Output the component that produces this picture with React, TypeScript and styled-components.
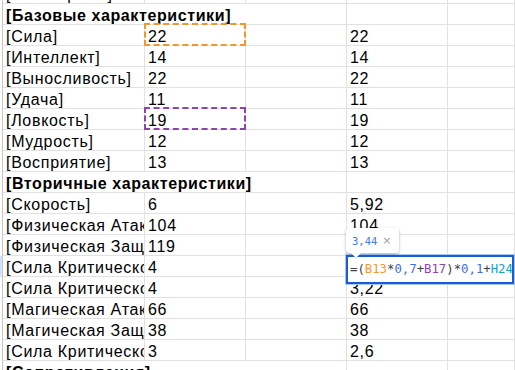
import React from 'react'
import styled, { createGlobalStyle } from 'styled-components'

const GlobalStyle = createGlobalStyle`
  html, body {
    margin: 0;
    padding: 0;
    background: #fff;
    overflow: hidden;
  }
  body {
    font-family: 'Liberation Sans', Arial, sans-serif;
    color: #000;
  }
`

const Viewport = styled.div`
  width: 515px;
  height: 370px;
  overflow: hidden;
`

const Sheet = styled.div`
  display: grid;
  grid-template-columns: 3px 142px 101px 101px 101px 1fr;
  grid-auto-rows: 21px;
  margin-top: -17px;
`

const Gutter = styled.div<{ $active?: boolean }>`
  box-sizing: border-box;
  border-right: 1px solid #c4c7c5;
  background: ${({ $active }) => ($active ? '#d3e3fd' : '#fff')};
`

const Cell = styled.div<{ $span?: number; $bold?: boolean; $open?: boolean }>`
  position: relative;
  grid-column: span ${({ $span }) => $span ?? 1};
  box-sizing: border-box;
  border-right: 1px solid #e1e1e1;
  border-bottom: 1px solid #e1e1e1;
  padding: 0 3px;
  font-size: 16px;
  letter-spacing: ${({ $bold }) => ($bold ? '0.6px' : '0.7px')};
  line-height: 24px;
  font-weight: ${({ $bold }) => ($bold ? 700 : 400)};
  white-space: nowrap;
  overflow: ${({ $open }) => ($open ? 'visible' : 'hidden')};
`

const Marquee = styled.div<{ $color: string }>`
  position: absolute;
  top: -2px;
  left: -1px;
  right: -1px;
  bottom: -1px;
  border: 2px dashed ${({ $color }) => $color};
  pointer-events: none;
`

const Editor = styled.div`
  position: absolute;
  top: -1px;
  left: -1px;
  z-index: 3;
  width: 168px;
  height: 29px;
  box-sizing: border-box;
  border: 2px solid #1a5dd1;
  outline: 1px solid #a8c7fa;
  background: #fff;
  padding-left: 2px;
  font-family: 'DejaVu Sans Mono', 'Liberation Mono', monospace;
  font-size: 12.3px;
  letter-spacing: 0;
  line-height: 25px;
  color: #3c4043;
  overflow: hidden;
`

const Ref = styled.span<{ $color: string }>`
  color: ${({ $color }) => $color};
`

const Bubble = styled.div`
  position: absolute;
  left: -1px;
  bottom: calc(100% + 3px);
  z-index: 4;
  display: flex;
  align-items: center;
  gap: 5px;
  height: 25px;
  padding: 0 7px 0 6px;
  box-sizing: border-box;
  background: #fff;
  border-radius: 3px;
  box-shadow: 0 1px 3px rgba(60, 64, 67, 0.3), 0 1px 2px rgba(60, 64, 67, 0.15);
  font-family: 'DejaVu Sans Mono', 'Liberation Mono', monospace;
  font-size: 10.5px;
  letter-spacing: 0;
  line-height: 20px;
  color: #4a78d6;

  &::after {
    content: '';
    position: absolute;
    left: 5px;
    bottom: -5px;
    border-left: 5px solid transparent;
    border-right: 5px solid transparent;
    border-top: 5px solid #fff;
    filter: drop-shadow(0 1px 0 rgba(60, 64, 67, 0.2));
  }
`

const Close = styled.span`
  color: #9aa0a6;
  font-family: 'DejaVu Sans', sans-serif;
  font-size: 11px;
`

type Row = {
  label: string
  b?: string
  d?: string
  header?: boolean
  mark?: string
  editing?: boolean
}

const rows: Row[] = [
  { label: '[Очки Время]', b: '111' },
  { label: '[Базовые характеристики]', header: true },
  { label: '[Сила]', b: '22', d: '22', mark: '#f5962a' },
  { label: '[Интеллект]', b: '14', d: '14' },
  { label: '[Выносливость]', b: '22', d: '22' },
  { label: '[Удача]', b: '11', d: '11' },
  { label: '[Ловкость]', b: '19', d: '19', mark: '#8e44ad' },
  { label: '[Мудрость]', b: '12', d: '12' },
  { label: '[Восприятие]', b: '13', d: '13' },
  { label: '[Вторичные характеристики]', header: true },
  { label: '[Скорость]', b: '6', d: '5,92' },
  { label: '[Физическая Атака]', b: '104', d: '104' },
  { label: '[Физическая Защита]', b: '119', d: '119' },
  { label: '[Сила Критического Удара]', b: '4', editing: true },
  { label: '[Сила Критического Удара]', b: '4', d: '3,22' },
  { label: '[Магическая Атака]', b: '66', d: '66' },
  { label: '[Магическая Защита]', b: '38', d: '38' },
  { label: '[Сила Критического Урона]', b: '3', d: '2,6' },
  { label: '[Сопротивления]', header: true },
]

function Formula() {
  return (
    <Editor>
      =(<Ref $color="#f29a2e">B13</Ref>*<Ref $color="#3f6fe0">0,7</Ref>+
      <Ref $color="#9146b0">B17</Ref>)*<Ref $color="#3f6fe0">0,1</Ref>+
      <Ref $color="#12a3c6">H24</Ref>
    </Editor>
  )
}

export default function App() {
  return (
    <>
      <GlobalStyle />
      <Viewport>
        <Sheet>
          {rows.map((r, i) => (
            <React.Fragment key={i}>
              <Gutter $active={r.editing} />
              {r.header ? (
                <Cell $span={3} $bold>
                  {r.label}
                </Cell>
              ) : (
                <>
                  <Cell>{r.label}</Cell>
                  <Cell $open={!!r.mark}>
                    {r.b}
                    {r.mark && <Marquee $color={r.mark} />}
                  </Cell>
                  <Cell />
                </>
              )}
              <Cell $open={r.editing}>
                {r.editing ? (
                  <>
                    <Bubble>
                      3,44<Close>×</Close>
                    </Bubble>
                    <Formula />
                  </>
                ) : (
                  r.d
                )}
              </Cell>
              <Cell />
            </React.Fragment>
          ))}
        </Sheet>
      </Viewport>
    </>
  )
}
